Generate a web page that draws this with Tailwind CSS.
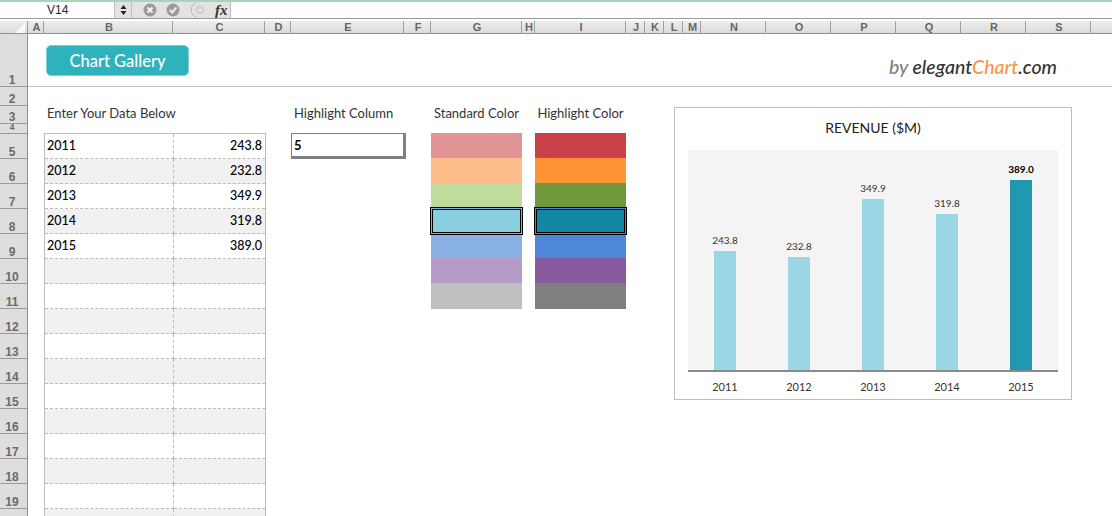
<!DOCTYPE html>
<html lang="en">
<head>
    <meta charset="UTF-8">
    <title>Chart Gallery</title>
    <script src="https://cdn.jsdelivr.net/npm/@tailwindcss/browser@4"></script>
</head>
<body class="bg-white h-[516px] w-[1112px] overflow-hidden font-['Lato','Open_Sans',sans-serif] text-[#333]">

<!-- formula bar -->
<div class="h-[16px] border-t-2 border-[#a5d6b8] border-b border-b-[#9a9a9a] flex items-stretch box-content bg-white">
    <div class="w-[114px] pl-[47px] text-[12px] leading-[16px] font-['Liberation_Sans',sans-serif] text-[#222]">V14</div>
    <div class="w-[18px] bg-[#e3e3e3] border-x border-[#bdbdbd] flex items-center justify-center">
        <svg width="7" height="12" viewBox="0 0 7 12"><path d="M3.5 1 L6.5 5 H0.5 Z M3.5 11 L0.5 7 H6.5 Z" fill="#222"/></svg>
    </div>
    <div class="w-[99px] bg-[#e3e3e3] border-r border-[#bdbdbd] flex items-center relative">
        <svg class="absolute left-[11px] top-[1px]" width="14" height="14" viewBox="0 0 14 14"><circle cx="7" cy="7" r="6.5" fill="#9b9b9b"/><path d="M4.5 4.5 L9.5 9.5 M9.5 4.5 L4.5 9.5" stroke="#f2f2f2" stroke-width="2"/></svg>
        <svg class="absolute left-[34px] top-[1px]" width="14" height="14" viewBox="0 0 14 14"><circle cx="7" cy="7" r="6.5" fill="#9b9b9b"/><path d="M4 7 L6.3 9.5 L10.3 4.5" fill="none" stroke="#f2f2f2" stroke-width="2"/></svg>
        <svg class="absolute left-[57px] top-0" width="18" height="16" viewBox="0 0 18 16"><path d="M7 1 A7.5 7.5 0 0 0 7 15" fill="none" stroke="#b5b5b5" stroke-width="1"/><circle cx="11" cy="8" r="4.5" fill="#d2d2d2"/><path d="M9 8 H13" stroke="#f4f4f4" stroke-width="1.5"/></svg>
        <span class="absolute left-[83px] top-0 font-['Liberation_Serif',serif] italic font-bold text-[15px] leading-[16px] text-[#333]">fx</span>
    </div>
    <div class="flex-1"></div>
</div>

<!-- column headers -->
<div class="h-[12px] mt-[2px] box-content border-b border-[#8f8f8f] bg-gradient-to-b from-[#eeeeee] to-[#dcdcdc] grid grid-cols-[28px_16px_129px_92px_26px_113px_27px_91px_13px_91px_19px_19px_19px_18px_65px_65px_65px_65px_65px_65px_21px] text-[11px] leading-[13px] font-bold text-[#666] text-center font-['Liberation_Sans',sans-serif] [&>div]:pl-[2px]">
    <div class="border-r border-[#a0a0a0] relative"><span class="absolute right-[2px] bottom-[1px] w-0 h-0 border-l-[10px] border-l-transparent border-b-[10px] border-b-[#fafafa]"></span></div>
    <div class="border-r border-[#a0a0a0]">A</div>
    <div class="border-r border-[#a0a0a0]">B</div>
    <div class="border-r border-[#a0a0a0]">C</div>
    <div class="border-r border-[#a0a0a0]">D</div>
    <div class="border-r border-[#a0a0a0]">E</div>
    <div class="border-r border-[#a0a0a0]">F</div>
    <div class="border-r border-[#a0a0a0]">G</div>
    <div class="border-r border-[#a0a0a0]">H</div>
    <div class="border-r border-[#a0a0a0]">I</div>
    <div class="border-r border-[#a0a0a0]">J</div>
    <div class="border-r border-[#a0a0a0]">K</div>
    <div class="border-r border-[#a0a0a0]">L</div>
    <div class="border-r border-[#a0a0a0]">M</div>
    <div class="border-r border-[#a0a0a0]">N</div>
    <div class="border-r border-[#a0a0a0]">O</div>
    <div class="border-r border-[#a0a0a0]">P</div>
    <div class="border-r border-[#a0a0a0]">Q</div>
    <div class="border-r border-[#a0a0a0]">R</div>
    <div class="border-r border-[#a0a0a0]">S</div>
    <div></div>
</div>

<div class="flex">
    <!-- row headers -->
    <div class="w-[28px] shrink-0 bg-[#dedede] border-r border-[#8f8f8f] flex flex-col text-[12px] font-bold text-[#6a6a6a] text-center font-['Liberation_Sans',sans-serif] leading-[11px]">
        <div class="h-[53px] border-b border-[#9a9a9a] flex items-end justify-center pr-[3px]">1</div>
        <div class="h-[19px] border-b border-[#9a9a9a] flex items-end justify-center pr-[3px]">2</div>
        <div class="h-[18px] border-b border-[#9a9a9a] flex items-end justify-center pr-[3px]">3</div>
        <div class="h-[10px] border-b border-[#9a9a9a] flex items-end justify-center pr-[3px] overflow-hidden text-[9px]">4</div>
        <div class="h-[25px] border-b border-[#9a9a9a] flex items-end justify-center pr-[3px]">5</div>
        <div class="h-[25px] border-b border-[#9a9a9a] flex items-end justify-center pr-[3px]">6</div>
        <div class="h-[25px] border-b border-[#9a9a9a] flex items-end justify-center pr-[3px]">7</div>
        <div class="h-[25px] border-b border-[#9a9a9a] flex items-end justify-center pr-[3px]">8</div>
        <div class="h-[25px] border-b border-[#9a9a9a] flex items-end justify-center pr-[3px]">9</div>
        <div class="h-[25px] border-b border-[#9a9a9a] flex items-end justify-center pr-[3px]">10</div>
        <div class="h-[25px] border-b border-[#9a9a9a] flex items-end justify-center pr-[3px]">11</div>
        <div class="h-[25px] border-b border-[#9a9a9a] flex items-end justify-center pr-[3px]">12</div>
        <div class="h-[25px] border-b border-[#9a9a9a] flex items-end justify-center pr-[3px]">13</div>
        <div class="h-[25px] border-b border-[#9a9a9a] flex items-end justify-center pr-[3px]">14</div>
        <div class="h-[25px] border-b border-[#9a9a9a] flex items-end justify-center pr-[3px]">15</div>
        <div class="h-[25px] border-b border-[#9a9a9a] flex items-end justify-center pr-[3px]">16</div>
        <div class="h-[25px] border-b border-[#9a9a9a] flex items-end justify-center pr-[3px]">17</div>
        <div class="h-[25px] border-b border-[#9a9a9a] flex items-end justify-center pr-[3px]">18</div>
        <div class="h-[25px] border-b border-[#9a9a9a] flex items-end justify-center pr-[3px]">19</div>
        <div class="h-[25px]"></div>
    </div>

    <!-- sheet -->
    <div class="relative flex-1 h-[482px] overflow-hidden">
        <!-- top band -->
        <div class="h-[53px] border-b border-[#c4c4c4] flex justify-between pl-[18px] pr-[55px]">
            <div class="w-[143px] h-[31px] mt-[11px] rounded-[5px] bg-[#2eb2bc] border border-[#7fd0d6] text-white text-[16.5px] font-medium leading-[30px] text-center">Chart Gallery</div>
            <div class="self-end mb-[7px] italic font-medium text-[19.5px] leading-[24px] text-[#333]"><span class="text-[#7f7f7f]">by</span> elegant<span class="text-[#f79646]">Chart</span>.com</div>
        </div>

        <div class="flex pl-[16px]">
            <!-- data table -->
            <div class="w-[222px] shrink-0">
                <div class="h-[46px] pl-[3px] pt-[17px] text-[13px] leading-[18px]">Enter Your Data Below</div>
                <div class="border-l border-r border-t border-[#bdbdbd] grid grid-cols-[129px_1fr] text-[12.5px] text-black font-medium">
                    <div class="h-[25px] pl-[2px] leading-[24px] border-b border-r border-dashed border-[#bbb] ">2011</div>
                    <div class="h-[25px] pr-[3px] leading-[24px] text-right border-b border-dashed border-[#bbb]">243.8</div>
                    <div class="h-[25px] pl-[2px] leading-[24px] bg-[#f1f1f1] border-b border-r border-dashed border-[#bbb]">2012</div>
                    <div class="h-[25px] pr-[3px] leading-[24px] text-right bg-[#f1f1f1] border-b border-dashed border-[#bbb]">232.8</div>
                    <div class="h-[25px] pl-[2px] leading-[24px] border-b border-r border-dashed border-[#bbb]">2013</div>
                    <div class="h-[25px] pr-[3px] leading-[24px] text-right border-b border-dashed border-[#bbb]">349.9</div>
                    <div class="h-[25px] pl-[2px] leading-[24px] bg-[#f1f1f1] border-b border-r border-dashed border-[#bbb]">2014</div>
                    <div class="h-[25px] pr-[3px] leading-[24px] text-right bg-[#f1f1f1] border-b border-dashed border-[#bbb]">319.8</div>
                    <div class="h-[25px] pl-[2px] leading-[24px] border-b border-r border-dashed border-[#bbb]">2015</div>
                    <div class="h-[25px] pr-[3px] leading-[24px] text-right border-b border-dashed border-[#bbb]">389.0</div>
                    <div class="h-[25px] bg-[#f1f1f1] border-b border-r border-dashed border-[#bbb]"></div>
                    <div class="h-[25px] bg-[#f1f1f1] border-b border-dashed border-[#bbb]"></div>
                    <div class="h-[25px] border-b border-r border-dashed border-[#bbb]"></div>
                    <div class="h-[25px] border-b border-dashed border-[#bbb]"></div>
                    <div class="h-[25px] bg-[#f1f1f1] border-b border-r border-dashed border-[#bbb]"></div>
                    <div class="h-[25px] bg-[#f1f1f1] border-b border-dashed border-[#bbb]"></div>
                    <div class="h-[25px] border-b border-r border-dashed border-[#bbb]"></div>
                    <div class="h-[25px] border-b border-dashed border-[#bbb]"></div>
                    <div class="h-[25px] bg-[#f1f1f1] border-b border-r border-dashed border-[#bbb]"></div>
                    <div class="h-[25px] bg-[#f1f1f1] border-b border-dashed border-[#bbb]"></div>
                    <div class="h-[25px] border-b border-r border-dashed border-[#bbb]"></div>
                    <div class="h-[25px] border-b border-dashed border-[#bbb]"></div>
                    <div class="h-[25px] bg-[#f1f1f1] border-b border-r border-dashed border-[#bbb]"></div>
                    <div class="h-[25px] bg-[#f1f1f1] border-b border-dashed border-[#bbb]"></div>
                    <div class="h-[25px] border-b border-r border-dashed border-[#bbb]"></div>
                    <div class="h-[25px] border-b border-dashed border-[#bbb]"></div>
                    <div class="h-[25px] bg-[#f1f1f1] border-b border-r border-dashed border-[#bbb]"></div>
                    <div class="h-[25px] bg-[#f1f1f1] border-b border-dashed border-[#bbb]"></div>
                    <div class="h-[25px] border-b border-r border-dashed border-[#bbb]"></div>
                    <div class="h-[25px] border-b border-dashed border-[#bbb]"></div>
                    <div class="h-[25px] bg-[#f1f1f1] border-r border-dashed border-[#bbb]"></div>
                    <div class="h-[25px] bg-[#f1f1f1]"></div>
                </div>
            </div>

            <!-- highlight column -->
            <div class="w-[25px] shrink-0"></div>
            <div class="w-[140px] shrink-0">
                <div class="h-[46px] pl-[3px] pt-[17px] text-[13px] leading-[18px]">Highlight Column</div>
                <div class="w-[115px] h-[26px] border border-[#808080] border-r-[3px] border-b-[3px] pl-[2px] text-[13px] font-bold leading-[22px] text-black">5</div>
            </div>

            <!-- colour swatches -->
            <div class="w-[91px] shrink-0">
                <div class="h-[46px] pt-[17px] text-[13px] leading-[18px] text-center">Standard Color</div>
                <div class="flex flex-col">
                    <div class="h-[25px] bg-[#e29393]"></div>
                    <div class="h-[25px] bg-[#ffbd8c]"></div>
                    <div class="h-[25px] bg-[#c0dc9b]"></div>
                    <div class="h-[25px] bg-[#8acfdf] relative">
                        <div class="absolute -left-[1px] -right-[1px] -top-[1px] -bottom-[2px] z-10 border border-black">
                            <div class="absolute inset-[1px] border border-black shadow-[0_0_0_1px_#8ab1e4]"></div>
                        </div>
                    </div>
                    <div class="h-[25px] bg-[#8ab1e4]"></div>
                    <div class="h-[25px] bg-[#b59bc8]"></div>
                    <div class="h-[26px] bg-[#bfbfbf]"></div>
                </div>
            </div>
            <div class="w-[13px] shrink-0"></div>
            <div class="w-[91px] shrink-0">
                <div class="h-[46px] pt-[17px] text-[13px] leading-[18px] text-center">Highlight Color</div>
                <div class="flex flex-col">
                    <div class="h-[25px] bg-[#c94146]"></div>
                    <div class="h-[25px] bg-[#ff9436]"></div>
                    <div class="h-[25px] bg-[#70993c]"></div>
                    <div class="h-[25px] bg-[#1286a2] relative">
                        <div class="absolute -left-[1px] -right-[1px] -top-[1px] -bottom-[2px] z-10 border border-black">
                            <div class="absolute inset-[1px] border border-black shadow-[0_0_0_1px_#4f87d8]"></div>
                        </div>
                    </div>
                    <div class="h-[25px] bg-[#4f87d8]"></div>
                    <div class="h-[25px] bg-[#875aa0]"></div>
                    <div class="h-[26px] bg-[#7f7f7f]"></div>
                </div>
            </div>
        </div>

        <!-- chart floats over the sheet -->
        <div class="absolute left-[646px] top-[73px] w-[398px] h-[293px] border border-[#bdbdbd] bg-white flex flex-col items-center">
            <div class="h-[42px] pt-[11px] text-[14px] leading-[18px] text-[#222]">REVENUE ($M)</div>
            <div class="w-[370px] h-[222px] bg-[#f4f4f4] border-b-2 border-[#8a8a8a] flex items-end justify-around text-[10px] text-[#333] text-center box-border">
                <div class="w-[74px] flex flex-col items-center"><span class="leading-[12px] mb-[5px]">243.8</span><div class="w-[22px] h-[119px] bg-[#9bd7e5]"></div></div>
                <div class="w-[74px] flex flex-col items-center"><span class="leading-[12px] mb-[5px]">232.8</span><div class="w-[22px] h-[113px] bg-[#9bd7e5]"></div></div>
                <div class="w-[74px] flex flex-col items-center"><span class="leading-[12px] mb-[5px]">349.9</span><div class="w-[22px] h-[171px] bg-[#9bd7e5]"></div></div>
                <div class="w-[74px] flex flex-col items-center"><span class="leading-[12px] mb-[5px]">319.8</span><div class="w-[22px] h-[156px] bg-[#9bd7e5]"></div></div>
                <div class="w-[74px] flex flex-col items-center"><span class="leading-[12px] mb-[5px] font-bold text-black">389.0</span><div class="w-[22px] h-[190px] bg-[#2098b0]"></div></div>
            </div>
            <div class="w-[370px] flex justify-around text-[11px] leading-[14px] mt-[8px] text-[#333] text-center">
                <div class="w-[74px]">2011</div>
                <div class="w-[74px]">2012</div>
                <div class="w-[74px]">2013</div>
                <div class="w-[74px]">2014</div>
                <div class="w-[74px]">2015</div>
            </div>
        </div>
    </div>
</div>
</body>
</html>
